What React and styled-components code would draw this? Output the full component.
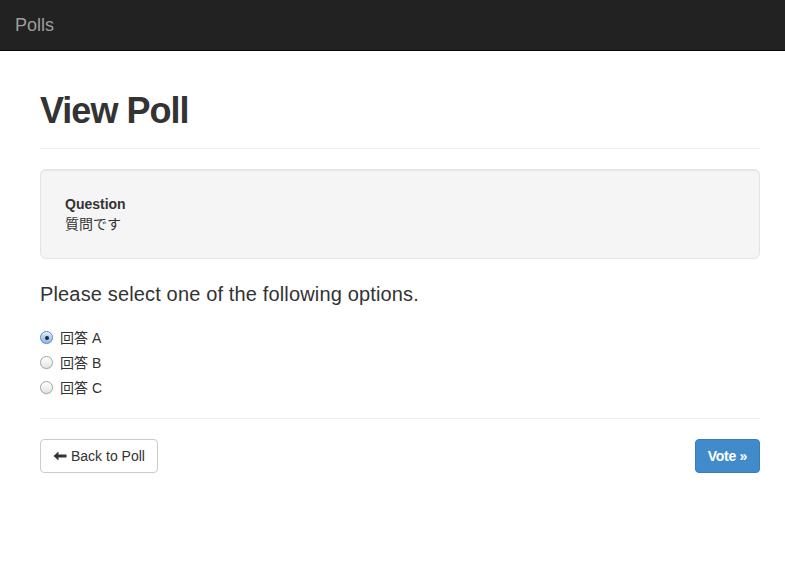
import React from 'react'
import styled, { createGlobalStyle } from 'styled-components'

const GlobalStyle = createGlobalStyle`
html, body {
  margin: 0;
  padding: 0;
  background: #fff;
}
body {
  font-family: "Liberation Sans", "Noto Sans CJK JP", Arial, sans-serif;
  font-size: 14px;
  line-height: 1.42857143;
  color: #333;
}
* {
  box-sizing: border-box;
}
`

const Navbar = styled.nav`
height: 51px;
background-color: #222;
border-bottom: 1px solid #080808;
display: flex;
align-items: flex-start;
`

const Brand = styled.a`
padding: 15px;
font-size: 18px;
line-height: 20px;
color: #9d9d9d;
text-decoration: none;
`

const Container = styled.div`
padding: 0 25px 0 40px;
`

const PageHeader = styled.div`
margin: 40px 0 20px;
padding-bottom: 9px;
border-bottom: 1px solid #eee;
`

const Title = styled.h1`
margin: 0 0 8px;
font-size: 36px;
font-weight: bold;
letter-spacing: -1px;
line-height: 1.1;
color: #333;
`

const Well = styled.div`
min-height: 20px;
padding: 24px;
margin-bottom: 20px;
background-color: #f5f5f5;
border: 1px solid #e3e3e3;
border-radius: 6px;
box-shadow: inset 0 1px 1px rgba(0, 0, 0, 0.05);
`

const WellLabel = styled.strong`
display: block;
font-weight: bold;
`

const WellText = styled.div``

const Lead = styled.h4`
margin: 24px 0 0;
font-size: 20px;
font-weight: normal;
letter-spacing: 0.15px;
line-height: 1.1;
`

const RadioList = styled.div`
margin: 23px 0 10px;
display: flex;
flex-direction: column;
gap: 5px;
`

const RadioLabel = styled.label`
display: flex;
align-items: center;
min-height: 20px;
line-height: 20px;
cursor: pointer;
`

const RadioInput = styled.input`
appearance: none;
-webkit-appearance: none;
width: 13px;
height: 13px;
margin: 0 7px 0 0;
border-radius: 50%;
border: 1px solid #a4a4a4;
background: linear-gradient(#ffffff, #e4e4e4);
box-shadow: inset 0 1px 1px rgba(255, 255, 255, 0.8), 0 0.5px 1px rgba(0, 0, 0, 0.15);
position: relative;
flex: none;
&:checked {
  border-color: #5b86bf;
  background: linear-gradient(#d5e6fa, #8fb7ea);
}
&:checked::after {
  content: "";
  position: absolute;
  left: 3.5px;
  top: 3.5px;
  width: 4px;
  height: 4px;
  border-radius: 50%;
  background: #1c2a3d;
}
`

const Divider = styled.hr`
margin: 20px 0;
border: 0;
border-top: 1px solid #eee;
`

const Actions = styled.div`
display: flex;
justify-content: space-between;
align-items: center;
`

const Button = styled.button`
display: inline-flex;
align-items: center;
gap: 4px;
padding: 6px 12px;
font-family: inherit;
font-size: 14px;
line-height: 20px;
border-radius: 4px;
border: 1px solid ${props => (props.$primary ? '#357ebd' : '#ccc')};
background-color: ${props => (props.$primary ? '#428bca' : '#fff')};
color: ${props => (props.$primary ? '#fff' : '#333')};
font-weight: ${props => (props.$primary ? 'bold' : 'normal')};
letter-spacing: ${props => (props.$primary ? '-0.3px' : 'normal')};
cursor: pointer;
`

const ArrowIcon = () => (
  <svg width="14" height="14" viewBox="0 0 14 14" aria-hidden="true">
    <path d="M0.5 7 L5.5 2.5 V5.5 H13.5 V8.5 H5.5 V11.5 Z" fill="#333" />
  </svg>
)

const options = ['回答 A', '回答 B', '回答 C']

export default function App() {
  return (
    <>
      <GlobalStyle />
      <Navbar>
        <Brand href="#">Polls</Brand>
      </Navbar>
      <Container>
        <PageHeader>
          <Title>View Poll</Title>
        </PageHeader>
        <Well>
          <WellLabel>Question</WellLabel>
          <WellText>質問です</WellText>
        </Well>
        <Lead>Please select one of the following options.</Lead>
        <RadioList>
          {options.map((opt, i) => (
            <RadioLabel key={opt}>
              <RadioInput type="radio" name="choice" defaultChecked={i === 0} />
              {opt}
            </RadioLabel>
          ))}
        </RadioList>
        <Divider />
        <Actions>
          <Button>
            <ArrowIcon />
            Back to Poll
          </Button>
          <Button $primary>Vote »</Button>
        </Actions>
      </Container>
    </>
  )
}
